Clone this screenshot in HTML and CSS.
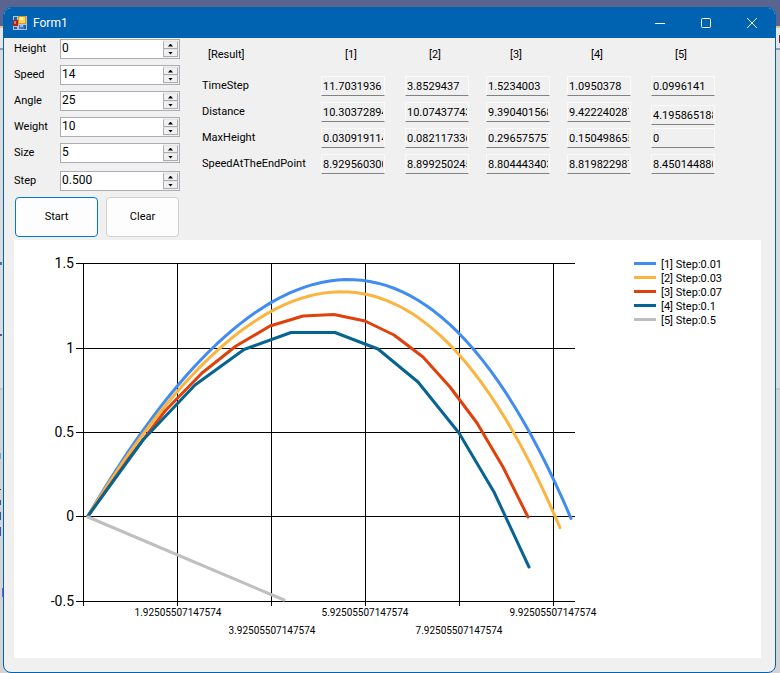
FILE: index.html
```html
<!DOCTYPE html>
<html lang="en">
<head>
<meta charset="utf-8">
<title>Form1</title>
<link rel="stylesheet" href="styles.css">
</head>
<body>
<div class="window">
  <header class="titlebar">
    <svg class="app-icon" width="14" height="14" viewBox="0 0 14 14" aria-hidden="true">
      <rect width="14" height="14" fill="#b9c3d6"/>
      <path d="M1 1h3v3H1zM1 11h3v2H1zM11 9h2v4h-2z" fill="#1763ae"/>
      <rect x="0" y="4" width="5" height="6" fill="#b3201b"/><rect x="1" y="5" width="2" height="3" fill="#ec7263"/>
      <rect x="5" y="0" width="8" height="8" fill="#d89a18"/><rect x="6" y="1" width="6" height="6" fill="#ffd957"/><rect x="7" y="1" width="3" height="3" fill="#fff0a3"/>
      <rect x="6" y="9" width="5" height="4" fill="#3f78dc"/><rect x="7" y="9" width="3" height="2" fill="#93bcff"/>
    </svg>
    <h1 class="title">Form1</h1>
    <button class="caption" type="button" aria-label="Minimize"><svg width="12" height="12" viewBox="0 0 12 12"><path d="M1 6.5h10"/></svg></button>
    <button class="caption" type="button" aria-label="Maximize"><svg width="12" height="12" viewBox="0 0 12 12"><rect x="1.5" y="1.5" width="9" height="9" rx="1"/></svg></button>
    <button class="caption" type="button" aria-label="Close"><svg width="12" height="12" viewBox="0 0 12 12"><path d="M1 1l10 10M11 1L1 11"/></svg></button>
  </header>
  <main class="content">
    <div class="top">
      <form class="params">
        <div class="field"><label for="height">Height</label><div class="spin"><input id="height" type="text" value="0"><span class="arrows"><button type="button" class="up" aria-label="Increase height"></button><button type="button" class="down" aria-label="Decrease height"></button></span></div></div>
        <div class="field"><label for="speed">Speed</label><div class="spin"><input id="speed" type="text" value="14"><span class="arrows"><button type="button" class="up" aria-label="Increase speed"></button><button type="button" class="down" aria-label="Decrease speed"></button></span></div></div>
        <div class="field"><label for="angle">Angle</label><div class="spin"><input id="angle" type="text" value="25"><span class="arrows"><button type="button" class="up" aria-label="Increase angle"></button><button type="button" class="down" aria-label="Decrease angle"></button></span></div></div>
        <div class="field"><label for="weight">Weight</label><div class="spin"><input id="weight" type="text" value="10"><span class="arrows"><button type="button" class="up" aria-label="Increase weight"></button><button type="button" class="down" aria-label="Decrease weight"></button></span></div></div>
        <div class="field"><label for="size">Size</label><div class="spin"><input id="size" type="text" value="5"><span class="arrows"><button type="button" class="up" aria-label="Increase size"></button><button type="button" class="down" aria-label="Decrease size"></button></span></div></div>
        <div class="field step"><label for="step">Step</label><div class="spin"><input id="step" type="text" value="0.500"><span class="arrows"><button type="button" class="up" aria-label="Increase step"></button><button type="button" class="down" aria-label="Decrease step"></button></span></div></div>
        <div class="actions">
          <button class="btn primary" type="button">Start</button>
          <button class="btn" type="button">Clear</button>
        </div>
      </form>
      <table class="results">
        <colgroup><col class="names"><col class="wide"><col><col><col class="wide"><col></colgroup>
        <thead>
          <tr><th class="corner" scope="col">[Result]</th><th scope="col">[1]</th><th scope="col">[2]</th><th scope="col">[3]</th><th scope="col">[4]</th><th scope="col">[5]</th></tr>
        </thead>
        <tbody>
          <tr><th scope="row">TimeStep</th>
            <td><input readonly aria-label="TimeStep 1" value="11.7031936"></td><td><input readonly aria-label="TimeStep 2" value="3.8529437"></td><td><input readonly aria-label="TimeStep 3" value="1.5234003"></td><td><input readonly aria-label="TimeStep 4" value="1.0950378"></td><td><input readonly aria-label="TimeStep 5" value="0.0996141"></td></tr>
          <tr><th scope="row">Distance</th>
            <td><input readonly aria-label="Distance 1" value="10.303728941"></td><td><input readonly aria-label="Distance 2" value="10.074377431"></td><td><input readonly aria-label="Distance 3" value="9.3904015681"></td><td><input readonly aria-label="Distance 4" value="9.4222402871"></td><td class="low"><input readonly aria-label="Distance 5" value="4.1958651881"></td></tr>
          <tr><th scope="row">MaxHeight</th>
            <td><input readonly aria-label="MaxHeight 1" value="0.0309191141"></td><td><input readonly aria-label="MaxHeight 2" value="0.0821173361"></td><td><input readonly aria-label="MaxHeight 3" value="0.2965757571"></td><td><input readonly aria-label="MaxHeight 4" value="0.1504986551"></td><td><input readonly aria-label="MaxHeight 5" value="0"></td></tr>
          <tr><th scope="row">SpeedAtTheEndPoint</th>
            <td><input readonly aria-label="End speed 1" value="8.9295603001"></td><td><input readonly aria-label="End speed 2" value="8.8992502451"></td><td><input readonly aria-label="End speed 3" value="8.8044434031"></td><td><input readonly aria-label="End speed 4" value="8.8198229871"></td><td><input readonly aria-label="End speed 5" value="8.4501448801"></td></tr>
        </tbody>
      </table>
    </div>
    <svg class="chart" viewBox="14 240 747 418" role="img" aria-label="Trajectories by step size">
      <g class="grid">
        <path d="M76 263.5H575M76 348.5H575M76 432.5H575M76 516.5H575M76 601.5H575"/>
        <path d="M83.5 263V606M177.5 263V606M271.5 263V606M365.5 263V606M459.5 263V606M553.5 263V606"/>
      </g>
      <g class="y-labels">
        <text x="74" y="268">1.5</text><text x="74" y="353">1</text><text x="74" y="437">0.5</text><text x="74" y="521">0</text><text x="74" y="606">-0.5</text>
      </g>
      <g class="x-labels">
        <text x="178" y="616">1.92505507147574</text><text x="272" y="634">3.92505507147574</text><text x="365" y="616">5.92505507147574</text><text x="459" y="634">7.92505507147574</text><text x="553" y="616">9.92505507147574</text>
      </g>
      <g class="series" id="series"></g>
      <g class="legend" id="legend"></g>
    </svg>
  </main>
</div>
<script src="chart.js"></script>
</body>
</html>
```
FILE: styles.css
```css
* { box-sizing: border-box; }

body {
  margin: 0;
  min-height: 100vh;
  padding: 7px 4px 0 3px;
  font: 11px/14px Roboto, "Liberation Sans", sans-serif;
  color: #000;
  background:
    linear-gradient(#3c78b0, #3c78b0) 0 262px / 2px 3px no-repeat,
    linear-gradient(#4a5a9e, #4a5a9e) 0 334px / 2px 2px no-repeat,
    linear-gradient(#5bb0d0, #5bb0d0) 0 453px / 1px 6px no-repeat,
    linear-gradient(#203f80, #203f80) 0 489px / 1px 1px no-repeat,
    linear-gradient(#2060a8, #2060a8) 0 500px / 1px 5px no-repeat,
    linear-gradient(#2060a8, #2060a8) 0 512px / 1px 8px no-repeat,
    linear-gradient(#2060a8, #2060a8) 0 527px / 1px 9px no-repeat,
    linear-gradient(#8a50e0, #8a50e0) 2px 588px / 1px 9px no-repeat,
    linear-gradient(#7a2030, #7a2030) 100% 35px / 1px 8px no-repeat,
    linear-gradient(#5a6490 0 26px, #e8c274 26px 28px, #e6e7ee 28px 48px, #8e9bb8 48px 50px, #dcdcde 50px 388px, #c6c6ca 388px 390px, #d4d4d6 390px);
}

button, input { font: inherit; color: inherit; }

.window {
  min-height: calc(100vh - 8px);
  border: 1px solid #0063b1;
  border-radius: 8px;
  background: #f0f0f0;
  overflow: hidden;
}

.titlebar {
  display: flex;
  align-items: center;
  height: 30px;
  padding-left: 9px;
  background: #0063b1;
  color: #fff;
}
.title { margin: 0 auto 0 6px; font-size: 12px; font-weight: 400; }
.caption {
  display: grid;
  place-items: center;
  width: 46px;
  height: 30px;
  padding: 0;
  border: 0;
  background: none;
}
.caption svg { fill: none; stroke: #fff; }

.content { padding: 1px 14px 14px 10px; }
.top { display: flex; align-items: flex-start; gap: 22px; height: 201px; }

.params { flex: none; width: 166px; }
.field { display: flex; margin-bottom: 6px; }
.field label { flex: 0 0 46px; line-height: 20px; }
.field.step { margin: 8px 0 6px; }
.spin {
  display: flex;
  flex: 1;
  min-width: 0;
  height: 20px;
  border: 1px solid #abadb3;
  background: #fff;
}
.spin input {
  flex: 1;
  min-width: 0;
  height: 16px;
  padding: 0 1px;
  border: 0;
  outline: 0;
  background: none;
  font-size: 12px;
}
.arrows { display: flex; flex: none; flex-direction: column; width: 16px; height: 18px; padding: 1px 1px 1px 0; background: #f0f0f0; }
.arrows button {
  display: grid;
  place-items: center;
  flex: 1;
  padding: 0;
  border: 1px solid #abadb3;
  border-top-color: #e4e4e4;
  background: #f0f0f0;
}
.arrows button::before { content: ""; width: 5px; height: 3px; background: #000; }
.arrows .up::before { clip-path: polygon(50% 0, 100% 100%, 0 100%); }
.arrows .down::before { clip-path: polygon(0 0, 100% 0, 50% 100%); }

.actions { display: flex; gap: 8px; padding-left: 1px; }
.btn {
  width: 73px;
  height: 40px;
  padding: 0;
  border: 1px solid #d0d0d0;
  border-radius: 4px;
  background: #fdfdfd;
}
.btn.primary { width: 83px; border-color: #0078d4; }

.results { table-layout: fixed; width: 530px; flex: none; border-collapse: collapse; margin-top: 4px; }
.results col { width: 81px; }
.results col.names { width: 119px; }
.results col.wide { width: 84px; }
.results th { padding: 0; font-weight: 400; text-align: left; vertical-align: top; line-height: 20px; }
.results thead th { height: 33px; padding: 2px 0 0 24px; }
.results thead .corner { padding-left: 6px; }
.results td { height: 26px; padding: 0 0 4px; vertical-align: top; }
.results td.low { padding-bottom: 3px; vertical-align: bottom; }
.results input {
  display: block;
  width: 64px;
  height: 20px;
  padding: 0 1px;
  border: 1px solid #fafafa;
  border-bottom-color: #828282;
  outline: 0;
  background: #f0f0f0;
}

.chart { display: block; width: 100%; height: auto; background: #fff; }
.grid { fill: none; stroke: #000; shape-rendering: crispEdges; }
.y-labels { font-size: 14px; text-anchor: end; }
.x-labels { font-size: 10px; text-anchor: middle; }
.series { fill: none; stroke-width: 3; stroke-linecap: round; stroke-linejoin: round; }
.legend path { stroke-width: 3; }
.legend text { font-size: 11px; }
```
FILE: chart.js
```js
const origin = { x: 88, y: 516 };

// A curve rises u * (range - u) * (a + b*u + c*u^2) above the origin at distance u.
const series = [
  { name: "[1] Step:0.01", color: "#418cf0", curve: { range: 482, end: 483, a: 0.0035631, b: 1.347e-6, c: 2.7e-9 } },
  { name: "[2] Step:0.03", color: "#fcb441", curve: { range: 467, end: 472, a: 0.0034866, b: 2.11e-6, c: 1.9e-9 } },
  { name: "[3] Step:0.07", color: "#e0400a", points: [[88,516],[127,461],[165,411],[202,373],[236,346],[270,326],[303,316],[334,314.5],[365,321],[394,335],[423,357],[450,387],[477,423],[503,467],[528,517]] },
  { name: "[4] Step:0.1", color: "#056492", points: [[88,516],[143,440],[195,385],[244,349.5],[291,332.5],[335,332.5],[378,349],[418,382],[459,433],[494,492],[529,567]] },
  { name: "[5] Step:0.5", color: "#bfbfbf", points: [[88,517],[284,600]] }
];

function curvePoints({ range, end, a, b, c }) {
  const steps = 60;
  return Array.from({ length: steps + 1 }, (_, i) => {
    const u = end * i / steps;
    return [origin.x + u, origin.y - u * (range - u) * (a + b * u + c * u * u)];
  });
}

function add(parent, tag, attrs, text) {
  const node = document.createElementNS("http://www.w3.org/2000/svg", tag);
  for (const key in attrs) node.setAttribute(key, attrs[key]);
  if (text) node.textContent = text;
  parent.appendChild(node);
}

const lines = document.getElementById("series");
const legend = document.getElementById("legend");
series.forEach((s, i) => {
  const y = 263.5 + i * 14;
  const points = s.points || curvePoints(s.curve);
  add(lines, "path", { d: "M" + points.map(p => p.join(" ")).join("L"), stroke: s.color });
  add(legend, "path", { d: `M634 ${y}h22`, stroke: s.color });
  add(legend, "text", { x: 661, y: y + 4.5 }, s.name);
});
```
